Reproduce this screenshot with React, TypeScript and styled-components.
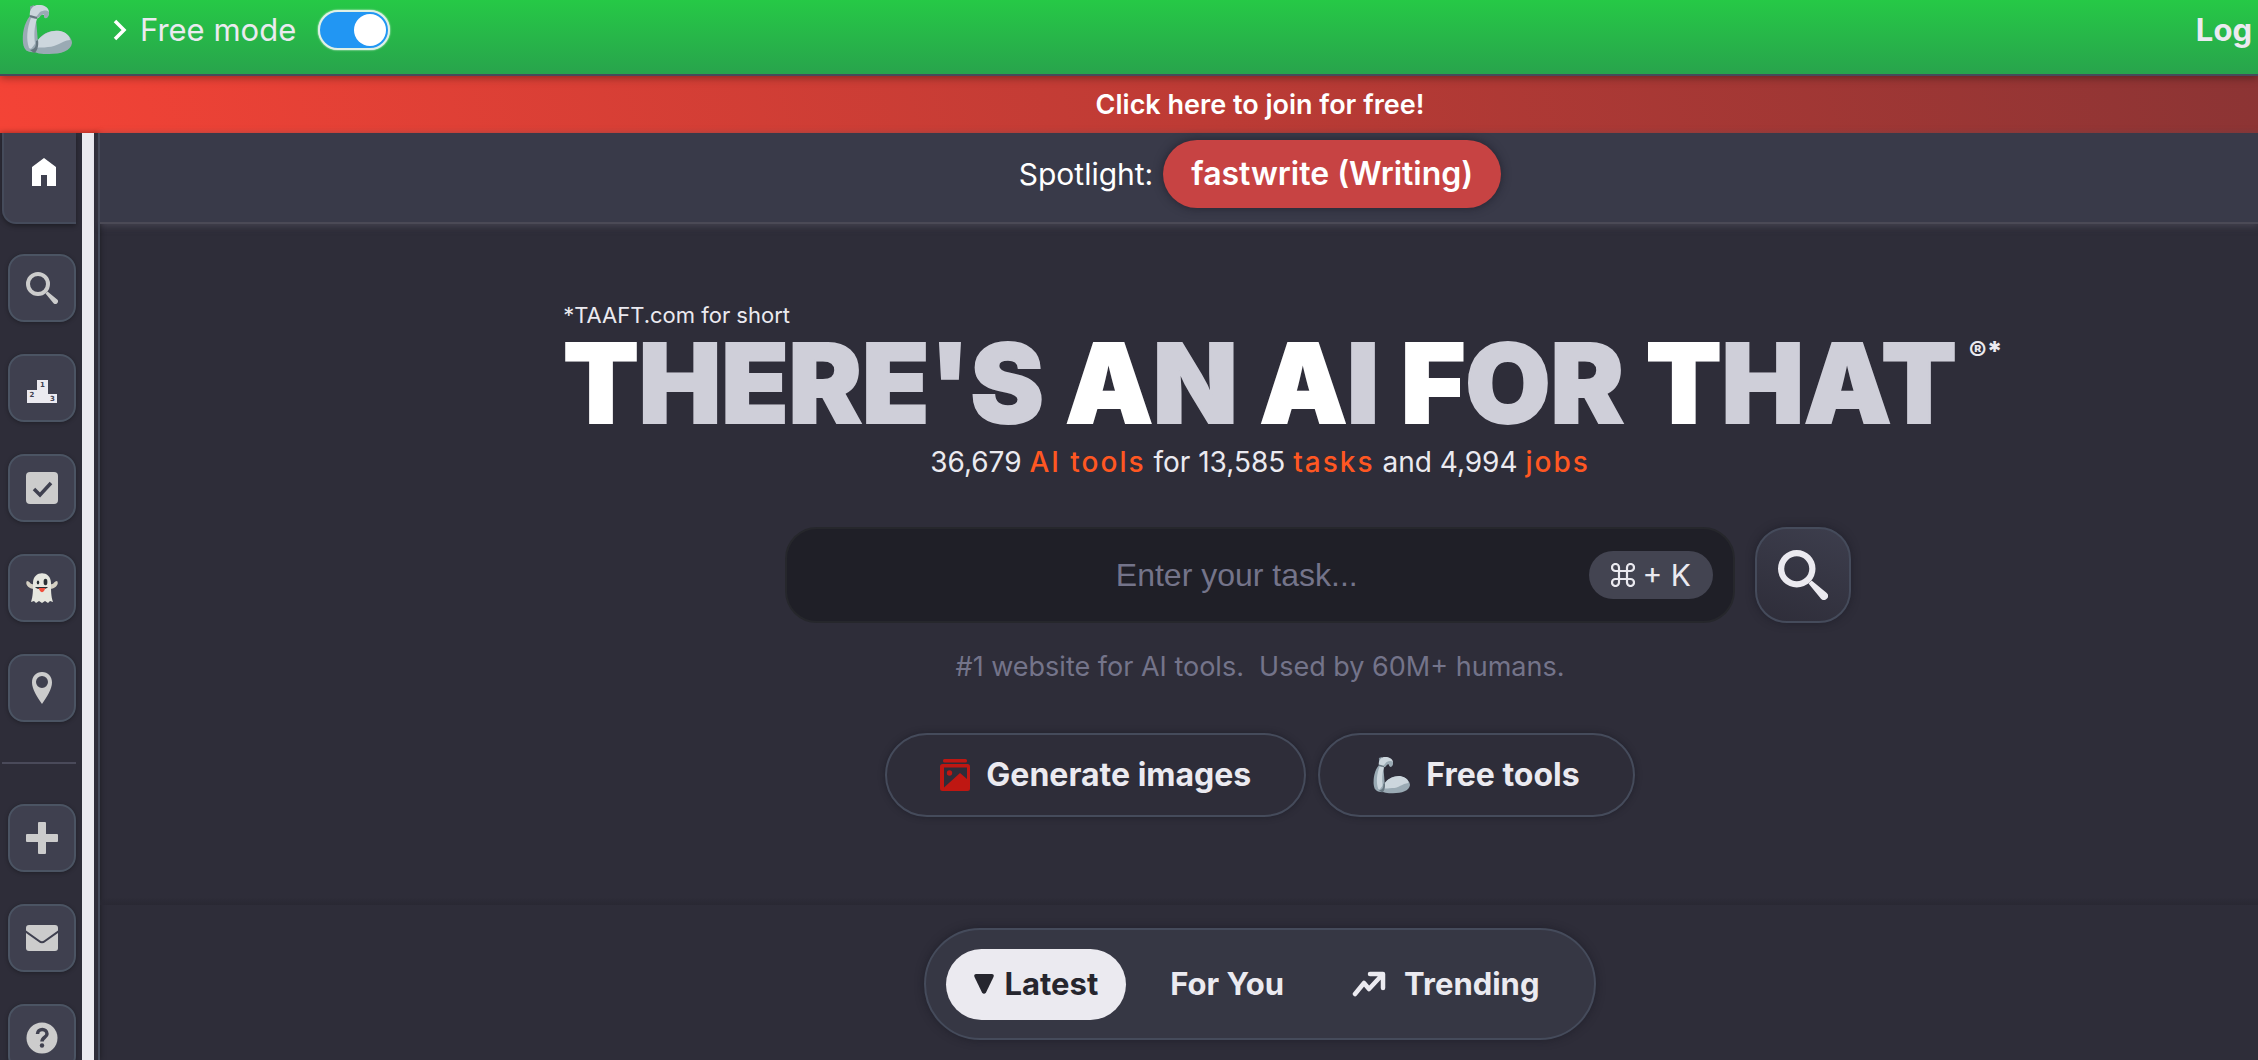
import React from 'react';
import styled, { createGlobalStyle } from 'styled-components';

const GlobalStyle = createGlobalStyle`
  *, *::before, *::after { box-sizing: border-box; }
  body { margin: 0; background: #2e2d39; color: #ebeaf0; font-family: Inter, "Liberation Sans", sans-serif; }
  button, input { font-family: inherit; color: inherit; }
  a { color: inherit; text-decoration: none; }
  svg { display: block; flex: none; }
`;

const line = '#454b5b';
const gutter = 262;

const Shell = styled.div`
  display: flex;
  flex-direction: column;
  height: 100vh;
  overflow: hidden;
`;

const Header = styled.header`
  position: relative;
  z-index: 1;
  display: flex;
  align-items: center;
  height: 76px;
  padding: 0 6px 14px 22px;
  background: linear-gradient(#26c946, #28a44c);
  border-bottom: 2px solid ${line};
  box-shadow: 0 2px 8px rgba(0, 0, 0, 0.35);
`;

const HeaderLink = styled.a`
  margin-left: auto;
  font-size: 31px;
  line-height: 40px;
  font-weight: 700;
`;

const ModeLabel = styled.label`
  display: flex;
  align-items: center;
  gap: 12px;
  margin-left: 40px;
  font-size: 31px;
  line-height: 40px;
`;

const Toggle = styled.input`
  appearance: none;
  display: flex;
  align-items: center;
  justify-content: flex-end;
  width: 72px;
  height: 40px;
  margin: 0 0 0 10px;
  padding: 0 2px;
  border: 2px solid #dff0e6;
  border-radius: 20px;
  background: #2196f3;
  box-shadow: 0 0 2px #fff;
  &::before {
    content: '';
    width: 32px;
    height: 32px;
    border-radius: 50%;
    background: #fff;
  }
`;

const JoinBanner = styled.button`
  flex: none;
  height: 57px;
  padding: 0 0 0 ${gutter}px;
  border: 0;
  background: linear-gradient(75deg, #f44336, #8c3434);
  color: #fff;
  font-size: 27px;
  line-height: 36px;
  font-weight: 600;
`;

const Body = styled.div`
  display: flex;
  flex: 1;
  min-height: 0;
`;

const Sidebar = styled.nav`
  display: flex;
  flex: none;
  width: 100px;
  overflow: hidden;
  border-right: 2px solid ${line};
  box-shadow: 0 0 6px rgba(0, 0, 0, 0.4);
`;

const SideList = styled.div`
  display: flex;
  flex-direction: column;
  align-items: flex-end;
  gap: 32px;
  width: 76px;
`;

const ScrollThumb = styled.div`
  width: 12px;
  margin-left: 6px;
  background: #ebeaf0;
`;

const HomeLink = styled.a`
  display: flex;
  flex: none;
  align-items: flex-start;
  justify-content: center;
  width: 74px;
  height: 91px;
  margin-bottom: -2px;
  padding: 25px 0 0 8px;
  border: solid ${line};
  border-width: 0 0 2px 2px;
  border-radius: 0 0 0 14px;
  background: #3f404f;
  box-shadow: 0 2px 5px rgba(0, 0, 0, 0.35);
`;

const SideLink = styled.a`
  display: flex;
  flex: none;
  align-items: center;
  justify-content: center;
  width: 68px;
  height: 68px;
  border: 2px solid #4b5463;
  border-radius: 16px;
  background: #3f404f;
  color: #ccc;
  box-shadow: 0 1px 4px rgba(0, 0, 0, 0.3);
`;

const SideRule = styled.hr`
  flex: none;
  width: 74px;
  height: 2px;
  margin: 8px 0;
  border: 0;
  background: #4a4a5a;
`;

const Main = styled.main`
  flex: 1;
  min-width: 0;
`;

const Spotlight = styled.section`
  display: flex;
  align-items: center;
  justify-content: center;
  gap: 10px;
  height: 91px;
  padding: 0 0 8px ${gutter - 100}px;
  border-bottom: 2px solid #4b4a56;
  background: #393a49;
  box-shadow: 0 2px 7px rgba(78, 77, 90, 0.7);
  color: #fff;
  font-size: 30px;
  line-height: 36px;
`;

const SpotlightLink = styled.a`
  padding: 14px 28px;
  border-radius: 34px;
  background: #c74343;
  box-shadow: 0 0 10px rgba(20, 20, 30, 0.6);
  font-size: 32px;
  line-height: 40px;
  font-weight: 600;
`;

const Hero = styled.section`
  display: flex;
  flex-direction: column;
  align-items: center;
  padding: 77px 0 88px ${gutter - 100}px;
  background: linear-gradient(transparent calc(100% - 8px), #292833);
`;

const CenteredRow = styled.div`
  display: grid;
  grid-template-columns: minmax(0, 1fr) auto minmax(0, 1fr);
  width: 100%;
`;

const Brand = styled.div`
  grid-column: 2;
`;

const Tagline = styled.p`
  margin: 0 0 4px;
  font-size: 22px;
  line-height: 28px;
`;

const Title = styled.h1`
  margin: 0;
  color: #cfcfd9;
  font-size: 110px;
  line-height: 100px;
  font-weight: 900;
  -webkit-text-stroke: 2px currentColor;
  white-space: nowrap;
`;

const Initial = styled.span`
  color: #fff;
`;

const Mark = styled.span`
  margin: 37px 0 0 12px;
  font-size: 27px;
  line-height: 28px;
  font-weight: 800;
`;

const Stats = styled.p`
  margin: 11px 0 47px;
  font-size: 28px;
  line-height: 36px;
`;

const StatLink = styled.a`
  color: #ff5722;
  font-weight: 500;
  letter-spacing: 2px;
`;

const SearchBox = styled.div`
  grid-column: 2;
  display: flex;
  align-items: center;
  width: 950px;
  height: 96px;
  padding: 0 20px;
  border: 2px solid #26272c;
  border-radius: 32px;
  background: #1f1f27;
`;

const SearchInput = styled.input`
  flex: 1;
  min-width: 0;
  padding: 0 0 0 78px;
  border: 0;
  outline: 0;
  background: transparent;
  font-family: "Liberation Sans", sans-serif;
  font-size: 32px;
  line-height: 40px;
  text-align: center;
  &::placeholder { color: #74748a; opacity: 1; }
`;

const Shortcut = styled.kbd`
  display: flex;
  align-items: center;
  gap: 8px;
  height: 48px;
  padding: 0 22px;
  border-radius: 24px;
  background: #434451;
  font-family: inherit;
  font-size: 30px;
`;

const SearchButton = styled.button`
  display: flex;
  align-items: center;
  justify-content: center;
  width: 96px;
  height: 96px;
  margin-left: 20px;
  padding: 0;
  border: 2px solid ${line};
  border-radius: 32px;
  background: linear-gradient(200deg, #3d3e4d, #2e2d39);
  box-shadow: 0 0 8px rgba(20, 20, 30, 0.5);
`;

const Note = styled.p`
  margin: 26px 0 48px;
  color: #74748a;
  font-size: 27px;
  line-height: 36px;
`;

const Actions = styled.div`
  display: flex;
  align-items: center;
  gap: 12px;
`;

const Action = styled.a`
  display: flex;
  align-items: center;
  gap: 16px;
  height: 84px;
  padding: 0 53px;
  border: 2px solid ${line};
  border-radius: 42px;
  box-shadow: 0 0 6px rgba(20, 20, 30, 0.5);
  font-size: 32px;
  line-height: 40px;
  font-weight: 700;
`;

const Feed = styled.section`
  display: flex;
  justify-content: center;
  padding: 23px 0 19px ${gutter - 100}px;
`;

const Tabs = styled.div`
  display: flex;
  align-items: center;
  height: 112px;
  padding: 0 20px;
  border: 2px solid ${line};
  border-radius: 56px;
  background: #363744;
  box-shadow: 0 0 8px rgba(20, 20, 30, 0.5);
`;

const Tab = styled.button<{ $active?: boolean }>`
  display: flex;
  align-items: center;
  gap: ${(p) => (p.$active ? 10 : 18)}px;
  height: 71px;
  padding: 0 ${(p) => (p.$active ? 28 : 34)}px;
  margin-right: ${(p) => (p.$active ? 10 : 0)}px;
  border: 0;
  border-radius: 36px;
  background: ${(p) => (p.$active ? '#ebeaf0' : 'transparent')};
  color: ${(p) => (p.$active ? '#26262e' : '#ebeaf0')};
  font-size: 31px;
  font-weight: 700;
  line-height: 40px;
`;

const Arm = ({ size, tall }: { size: number; tall: number }) => (
  <svg width={size} height={tall} viewBox="0 0 50 50" aria-hidden="true">
    <path d="M8 1.500 8.500 11 13 8 12 0Z" fill="#8899a6" />
    <path d="M12 1C17-2 27 1 27 7C27 13 22 15 22 10L18 9C19 11 17 14 13 14L8 11C7 7 9 3 12 1Z" fill="#ccd6dd" />
    <path d="M18 7C22 5 25 5 27 7C27 12 25 14 23 13C21 12 23 9 21 9L16 13 14 12Z" fill="#9aaab4" />
    <path d="M8 11C2 18 0 29 1 38C2 46 7 48 13 47L16 38 14 14Z" fill="#9aaab4" />
    <path d="M9 13C5 23 4 34 7 43C9 45 13 43 13 38C12 31 12 22 15 14Z" fill="#ccd6dd" />
    <path d="M16 35C20 29 28 25 36 26C45 27 50 33 50 38C49 46 39 49 27 49C20 49 13 49 9 44Z" fill="#9aaab4" />
    <path d="M16 35C22 28 30 25 38 26C44 27 48 31 48 35C39 36 35 42 26 42C21 43 18 42 14 43Z" fill="#ccd6dd" />
    <path d="M16 35C17 41 15 47 12 48L8 45C14 44 14 40 14 36Z" fill="#66757f" />
    <path d="M8 11 15 13" stroke="#66757f" strokeWidth="2" />
  </svg>
);

const Magnifier = ({ size }: { size: number }) => (
  <svg width={size} height={size} viewBox="0 0 32 32" fill="currentColor" aria-hidden="true">
    <path fillRule="evenodd" d="M12 0a12 12 0 1 0 0 24 12 12 0 0 0 0-24Zm0 4a8 8 0 1 1 0 16 8 8 0 0 1 0-16Z" />
    <path d="M21.500 19.500 31.200 27.500A2.600 2.600 0 0 1 27.500 31.200L19.500 21.500Z" />
  </svg>
);

const Home = () => (
  <svg width="24" height="28" viewBox="0 0 24 28" aria-hidden="true">
    <path d="M0 9 12 0 24 9V28H15V17H9V28H0Z" fill="#fff" />
  </svg>
);

const Podium = () => (
  <svg width="32" height="32" viewBox="0 0 32 32" aria-hidden="true">
    <path d="M1 18H11V8H22V22H31V31H1Z" fill="#ebeaf0" />
    <g fill="#3f404f" fontFamily="DejaVu Sans" fontWeight="700" fontSize="7">
      <text x="14" y="15">1</text>
      <text x="3.500" y="25">2</text>
      <text x="24" y="29">3</text>
    </g>
  </svg>
);

const CheckBoxIcon = () => (
  <svg width="32" height="32" viewBox="0 0 32 32" aria-hidden="true">
    <rect width="32" height="32" rx="4" fill="#ccc" />
    <path d="m8 17 6 6 11-12" fill="none" stroke="#3f404f" strokeWidth="3.500" />
  </svg>
);

const Ghost = () => (
  <svg width="32" height="32" viewBox="0 0 32 32" aria-hidden="true">
    <path d="M8 12C4 13 4 9 1 9C-1 11 1 16 8 17ZM24 12C28 13 28 9 31 9C33 11 31 16 24 17Z" fill="#d5d0c3" />
    <path d="M5 30C7 24 7 19 7 11C7-2 25-2 25 11C25 19 25 24 27 30L24 29 22 31 19 29 16 31 13 29 10 31 8 29Z" fill="#e6e7df" />
    <ellipse cx="12" cy="10.500" rx="1.200" ry="2" fill="#292f33" />
    <ellipse cx="19.500" cy="10" rx="1.900" ry="3.200" fill="#292f33" />
    <path d="M9 15H22C20 18 11 18 9 15Z" fill="#292f33" />
    <path d="M12.500 16H19.500L18 19C17 20.500 15 20.500 14 19Z" fill="#f04f3c" />
  </svg>
);

const Pin = () => (
  <svg width="32" height="32" viewBox="0 0 32 32" aria-hidden="true">
    <path fillRule="evenodd" d="M16 0C10 0 6 4.500 6 10.500C6 17 11 25 16 32C21 25 26 17 26 10.500C26 4.500 22 0 16 0Zm0 4a6 6 0 1 1 0 12 6 6 0 0 1 0-12Z" fill="#ccc" />
  </svg>
);

const Plus = () => (
  <svg width="32" height="32" viewBox="0 0 32 32" fill="#ccc" aria-hidden="true">
    <rect x="12" width="8" height="32" rx="1" />
    <rect y="12" width="32" height="8" rx="1" />
  </svg>
);

const Mail = () => (
  <svg width="32" height="26" viewBox="0 0 32 26" aria-hidden="true">
    <rect width="32" height="26" rx="3" fill="#ccc" />
    <path d="M-1 6 13 16Q16 18.500 19 16L33 6" fill="none" stroke="#3f404f" strokeWidth="2" />
  </svg>
);

const Help = () => (
  <svg width="32" height="32" viewBox="0 0 32 32" aria-hidden="true">
    <circle cx="16" cy="16" r="15.500" fill="#ccc" />
    <path d="M11.500 12C11.500 6 21 6 21 12C21 15.500 16 15 16 19.500" fill="none" stroke="#3f404f" strokeWidth="3.500" />
    <circle cx="16" cy="23.500" r="2.200" fill="#3f404f" />
  </svg>
);

const Gallery = () => (
  <svg width="30" height="32" viewBox="0 0 30 32" fill="#bf1712" aria-hidden="true">
    <rect x="3" width="24" height="3.500" rx="1.500" />
    <path fillRule="evenodd" d="M2.500 5H27.500A2.500 2.500 0 0 1 30 7.500V29.500A2.500 2.500 0 0 1 27.500 32H2.500A2.500 2.500 0 0 1 0 29.500V7.500A2.500 2.500 0 0 1 2.500 5ZM4 8.500V28.500L20 14 27 20V8.500Z" />
    <circle cx="9.500" cy="14" r="2.700" />
  </svg>
);

const Rising = () => (
  <svg width="34" height="26" viewBox="0 0 34 26" fill="none" stroke="#ebeaf0" strokeWidth="4.500" strokeLinecap="round" strokeLinejoin="round" aria-hidden="true">
    <path d="M3 23 12 12 17 18 30 4M18 3H31V17" />
  </svg>
);

const sideTop = [
  { label: 'Search', icon: <Magnifier size={32} /> },
  { label: 'Leaderboard', icon: <Podium /> },
  { label: 'Tasks', icon: <CheckBoxIcon /> },
  { label: 'Characters', icon: <Ghost /> },
  { label: 'Map', icon: <Pin /> },
];

const sideBottom = [
  { label: 'Submit', icon: <Plus /> },
  { label: 'Newsletter', icon: <Mail /> },
  { label: 'Help', icon: <Help /> },
];

const titleWords = ["THERE'S", 'AN', 'AI', 'FOR', 'THAT'];

export default function App() {
  return (
    <Shell>
      <GlobalStyle />
      <Header>
        <Arm size={50} tall={50} />
        <ModeLabel>
          <svg width="16" height="22" viewBox="0 0 16 22" fill="none" stroke="#fff" strokeWidth="3.500" aria-hidden="true">
            <path d="m3 2 9 9-9 9" />
          </svg>
          Free mode
          <Toggle type="checkbox" defaultChecked />
        </ModeLabel>
        <HeaderLink href="#login">Log</HeaderLink>
      </Header>
      <JoinBanner type="button">Click here to join for free!</JoinBanner>
      <Body>
        <Sidebar aria-label="Main">
          <SideList>
            <HomeLink href="#home" aria-label="Home"><Home /></HomeLink>
            {sideTop.map((s) => (
              <SideLink key={s.label} href="#" aria-label={s.label}>{s.icon}</SideLink>
            ))}
            <SideRule />
            {sideBottom.map((s) => (
              <SideLink key={s.label} href="#" aria-label={s.label}>{s.icon}</SideLink>
            ))}
          </SideList>
          <ScrollThumb />
        </Sidebar>
        <Main>
          <Spotlight>
            Spotlight: <SpotlightLink href="#fastwrite">fastwrite (Writing)</SpotlightLink>
          </Spotlight>
          <Hero>
            <CenteredRow>
              <Brand>
                <Tagline>*TAAFT.com for short</Tagline>
                <Title>
                  {titleWords.map((word, i) => (
                    <React.Fragment key={word}>
                      {i > 0 && ' '}
                      <Initial>{word[0]}</Initial>
                      {word.slice(1)}
                    </React.Fragment>
                  ))}
                </Title>
              </Brand>
              <Mark>®*</Mark>
            </CenteredRow>
            <Stats>
              36,679 <StatLink href="#tools">AI tools</StatLink> for 13,585 <StatLink href="#tasks">tasks</StatLink> and 4,994{' '}
              <StatLink href="#jobs">jobs</StatLink>
            </Stats>
            <CenteredRow>
              <SearchBox>
                <SearchInput type="text" aria-label="Task" placeholder="Enter your task..." />
                <Shortcut>
                  <svg width="24" height="24" viewBox="0 0 24 24" fill="none" stroke="currentColor" strokeWidth="2.200" aria-hidden="true">
                    <path d="M8 8V4.500A3.500 3.500 0 1 0 4.500 8H19.500A3.500 3.500 0 1 0 16 4.500V19.500A3.500 3.500 0 1 0 19.500 16H4.500A3.500 3.500 0 1 0 8 19.500Z" />
                  </svg>
                  <span>+ K</span>
                </Shortcut>
              </SearchBox>
              <SearchButton type="button" aria-label="Search"><Magnifier size={50} /></SearchButton>
            </CenteredRow>
            <Note>#1 website for AI tools.&nbsp; Used by 60M+ humans.</Note>
            <Actions>
              <Action href="#generate"><Gallery />Generate images</Action>
              <Action href="#free"><Arm size={37} tall={37} />Free tools</Action>
            </Actions>
          </Hero>
          <Feed>
            <Tabs role="tablist">
              <Tab role="tab" aria-selected $active>
                <svg width="20" height="20" viewBox="0 0 20 20" aria-hidden="true">
                  <path d="M2 0H18Q20.500 0 19.500 3L12 18.500Q10 21 8 18.500L.5 3Q-.5 0 2 0Z" fill="#26262e" />
                </svg>
                Latest
              </Tab>
              <Tab role="tab">For You</Tab>
              <Tab role="tab"><Rising />Trending</Tab>
            </Tabs>
          </Feed>
        </Main>
      </Body>
    </Shell>
  );
}
